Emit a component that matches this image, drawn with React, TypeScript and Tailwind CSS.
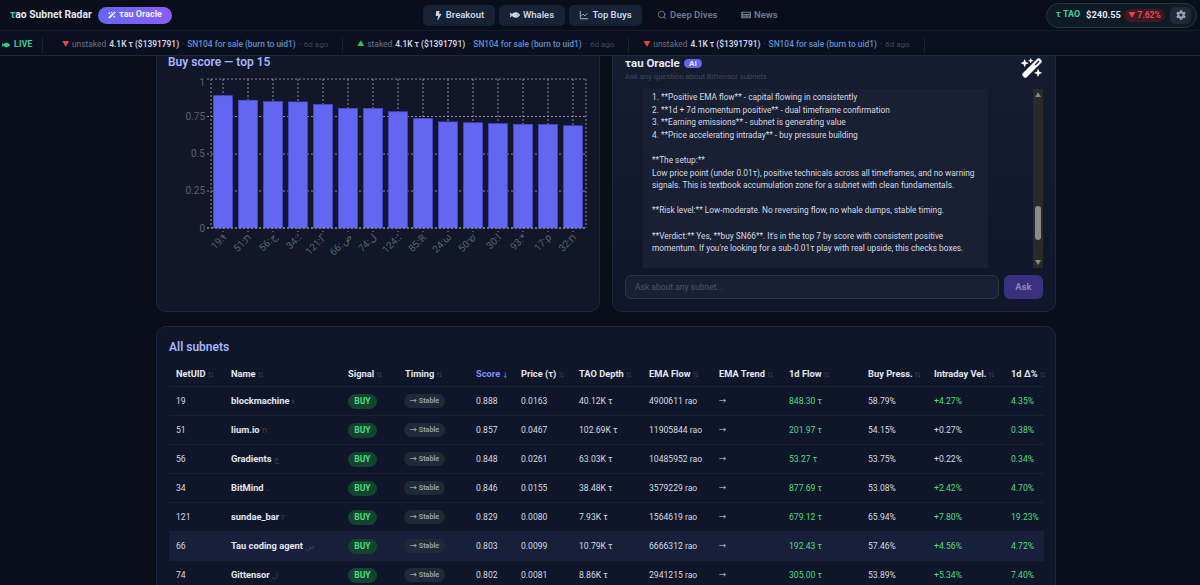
import { FaBolt, FaCog, FaFish, FaNewspaper } from 'react-icons/fa';
import { FaWandMagicSparkles } from 'react-icons/fa6';
import { ChartLine, Search } from 'lucide-react';

const bars = [
  { score: 0.888, label: '19:ŧ' },
  { score: 0.857, label: '51:ת' },
  { score: 0.848, label: '56:ج' },
  { score: 0.846, label: '34:؛' },
  { score: 0.829, label: '121:Γ' },
  { score: 0.803, label: '66:ض' },
  { score: 0.802, label: '74:ل' },
  { score: 0.78, label: '124:؛' },
  { score: 0.735, label: '85:ℝ' },
  { score: 0.712, label: '24:ω' },
  { score: 0.706, label: '50:ש' },
  { score: 0.7, label: '30:ا' },
  { score: 0.696, label: '93:*' },
  { score: 0.694, label: '17:ρ' },
  { score: 0.686, label: '32:ח' },
];

const yTicks = [
  { label: '1', y: 79, textY: 86 },
  { label: '0.75', y: 116.5, textY: 120 },
  { label: '0.5', y: 154, textY: 157 },
  { label: '0.25', y: 191, textY: 194 },
  { label: '0', y: 228, textY: 232 },
];

const columns = [
  { label: 'NetUID', width: 'w-[55px]' },
  { label: 'Name', width: 'w-[117px]' },
  { label: 'Signal', width: 'w-[57px]' },
  { label: 'Timing', width: 'w-[71px]' },
  { label: 'Score', width: 'w-[45px]' },
  { label: 'Price (τ)', width: 'w-[58px]' },
  { label: 'TAO Depth', width: 'w-[70px]' },
  { label: 'EMA Flow', width: 'w-[70px]' },
  { label: 'EMA Trend', width: 'w-[70px]' },
  { label: '1d Flow', width: 'w-[79px]' },
  { label: 'Buy Press.', width: 'w-[66px]' },
  { label: 'Intraday Vel.', width: 'w-[77px]' },
  { label: '1d Δ%', width: 'w-[40px]' },
];

const rows = [
  { id: 19, name: 'blockmachine', sym: 'ŧ', score: '0.888', price: '0.0163', depth: '40.12K τ', ema: '4900611 rao', flow: '848.30 τ', press: '58.79%', vel: '+4.27%', up: true, d1: '4.35%' },
  { id: 51, name: 'lium.io', sym: 'ח', score: '0.857', price: '0.0467', depth: '102.69K τ', ema: '11905844 rao', flow: '201.97 τ', press: '54.15%', vel: '+0.27%', up: false, d1: '0.38%' },
  { id: 56, name: 'Gradients', sym: 'ج', score: '0.848', price: '0.0261', depth: '63.03K τ', ema: '10485952 rao', flow: '53.27 τ', press: '53.75%', vel: '+0.22%', up: false, d1: '0.34%' },
  { id: 34, name: 'BitMind', sym: '،', score: '0.846', price: '0.0155', depth: '38.48K τ', ema: '3579229 rao', flow: '877.69 τ', press: '53.08%', vel: '+2.42%', up: true, d1: '4.70%' },
  { id: 121, name: 'sundae_bar', sym: 'Γ', score: '0.829', price: '0.0080', depth: '7.93K τ', ema: '1564619 rao', flow: '679.12 τ', press: '65.94%', vel: '+7.80%', up: true, d1: '19.23%' },
  { id: 66, name: 'Tau coding agent', sym: 'ض', score: '0.803', price: '0.0099', depth: '10.79K τ', ema: '6666312 rao', flow: '192.43 τ', press: '57.46%', vel: '+4.56%', up: true, d1: '4.72%' },
  { id: 74, name: 'Gittensor', sym: 'ل', score: '0.802', price: '0.0081', depth: '8.86K τ', ema: '2941215 rao', flow: '305.00 τ', press: '53.89%', vel: '+5.34%', up: true, d1: '7.40%' },
];

const oracleLines = [
  '1. **Positive EMA flow** - capital flowing in consistently',
  '2. **1d + 7d momentum positive** - dual timeframe confirmation',
  '3. **Earning emissions** - subnet is generating value',
  '4. **Price accelerating intraday** - buy pressure building',
  '',
  '**The setup:**',
  'Low price point (under 0.01τ), positive technicals across all timeframes, and no warning',
  'signals. This is textbook accumulation zone for a subnet with clean fundamentals.',
  '',
  '**Risk level:** Low-moderate. No reversing flow, no whale dumps, stable timing.',
  '',
  "**Verdict:** Yes, **buy SN66**. It's in the top 7 by score with consistent positive",
  "momentum. If you're looking for a sub-0.01τ play with real upside, this checks boxes.",
];

function TickerItem({ up }: { up: boolean }) {
  return (
    <div className="flex h-[14px] shrink-0 items-center border-r border-[#1a2233] px-[14px] text-[8.4px]">
      <span className={up ? 'mr-[3px] text-[7px] text-[#22c55e]' : 'mr-[3px] text-[7px] text-[#ef4444]'}>{up ? '▲' : '▼'}</span>
      <span className="text-[#6b7280]">{up ? 'staked' : 'unstaked'}</span>
      <span className="ml-[3px] font-semibold text-[#cbd5e1]">4.1K τ ($1391791)</span>
      <span className="mx-[3px] text-[#4b5563]">·</span>
      <span className="font-medium text-[#5f8fd0]">SN104 for sale (burn to uid1)</span>
      <span className="mx-[3px] text-[#4b5563]">·</span>
      <span className="text-[8px] text-[#3f4858]">6d ago</span>
    </div>
  );
}

function BuyChart() {
  return (
    <svg viewBox="157 67 442 220" width={442} height={220} className="-mt-[1px] block">
      <g stroke="#8b8f96" strokeWidth={1} strokeDasharray="2 2" fill="none">
        {yTicks.map((t) => (
          <line key={t.label} x1={207} x2={586} y1={t.y} y2={t.y} />
        ))}
        {bars.map((b, i) => (
          <line key={b.label} x1={223 + i * 25} x2={223 + i * 25} y1={79} y2={232} />
        ))}
        <line x1={211} x2={211} y1={79} y2={228} />
        <line x1={586} x2={586} y1={79} y2={228} />
      </g>
      {bars.map((b, i) => {
        const h = b.score * 149;
        return <rect key={b.label} x={213.5 + i * 25} y={228 - h} width={19} height={h} fill="#6366f1" stroke="#4f46e5" strokeWidth={0.7} />;
      })}
      <line x1={207} x2={586} y1={228} y2={228} stroke="#8b8f96" strokeDasharray="2 2" />
      {yTicks.map((t) => (
        <text key={t.label} x={205} y={t.textY} textAnchor="end" fontSize={10} fill="#5b6270">
          {t.label}
        </text>
      ))}
      {bars.map((b, i) => (
        <text
          key={b.label}
          x={227 + i * 25}
          y={238}
          textAnchor="end"
          fontSize={10}
          fill="#5b6270"
          transform={`rotate(-45 ${227 + i * 25} 238)`}
        >
          {b.label}
        </text>
      ))}
    </svg>
  );
}

export default function App() {
  return (
    <div className="h-[585px] w-[1200px] overflow-hidden bg-[#0a0e1a] font-['Roboto','Noto_Sans_CJK_SC',sans-serif] text-[#e2e8f0]">
      <header className="flex h-[31px] items-center border-b border-[#141b2a] bg-[#0a0e1a]">
        <div className="flex w-[423px] shrink-0 items-center pl-[10px]">
          <span className="w-[82px] whitespace-nowrap text-[10.3px] font-bold text-[#e2e8f0]">
            <span className="text-[#34d399]">τ</span>ao Subnet Radar
          </span>
          <button className="ml-[6px] flex h-[17px] w-[74px] items-center justify-center gap-[3px] rounded-full bg-gradient-to-r from-[#6366f1] to-[#8b5cf6] text-[9px] font-bold text-[#eef2ff]">
            <FaWandMagicSparkles className="h-[8px] w-[8px]" />
            τau Oracle
          </button>
        </div>
        <nav className="flex items-center gap-[4px] text-[9.5px] font-semibold">
          <a className="flex h-[21px] w-[72px] items-center justify-center gap-[3px] rounded-[5px] bg-[#162236] text-[#cbd5e1]">
            <FaBolt className="h-[9px] w-[9px]" /> Breakout
          </a>
          <a className="flex h-[21px] w-[66px] items-center justify-center gap-[3px] rounded-[5px] bg-[#162236] text-[#cbd5e1]">
            <FaFish className="h-[10px] w-[10px]" /> Whales
          </a>
          <a className="flex h-[21px] w-[73px] items-center justify-center gap-[3px] rounded-[5px] bg-[#162236] text-[#cbd5e1]">
            <ChartLine className="h-[10px] w-[10px]" strokeWidth={2} /> Top Buys
          </a>
          <a className="ml-[11px] flex h-[21px] w-[70px] items-center gap-[3px] text-[#6b7a90]">
            <Search className="h-[10px] w-[10px]" strokeWidth={2.2} /> Deep Dives
          </a>
          <a className="ml-[10px] flex h-[21px] items-center gap-[3px] text-[#6b7a90]">
            <FaNewspaper className="h-[10px] w-[10px]" /> News
          </a>
        </nav>
        <div className="ml-auto mr-[3px] flex h-[25px] w-[151px] items-center whitespace-nowrap rounded-full border border-[#1c3a3a] bg-[#0f1a24] pl-[9px]">
          <span className="w-[25px] text-[9px] font-bold text-[#34d399]">τ TAO</span>
          <span className="ml-[5px] w-[33px] text-[9.4px] font-bold text-[#e2e8f0]">$240.55</span>
          <span className="ml-[5px] flex h-[13px] w-[41px] items-center justify-center rounded-full bg-[#3a1a24] text-[8.5px] font-bold text-[#ef4444]">
            <span className="mr-[2px] text-[7px]">▼</span>7.62%
          </span>
          <span className="ml-[5px] flex h-[17px] w-[21px] items-center justify-center rounded-[5px] bg-[#1f2937] text-[#94a3b8]">
            <FaCog className="h-[10px] w-[10px]" />
          </span>
        </div>
      </header>

      <div className="flex h-[25px] items-center overflow-hidden border-b border-[#1a2a33] bg-[#0b1020] pt-[3px]">
        <div className="mr-[5px] flex h-[14px] w-[43px] shrink-0 items-center gap-[4px] border-r border-[#1a2233] pl-[2px] text-[8.5px] font-bold tracking-[0.3px] text-[#34d399]">
          <FaFish className="h-[8px] w-[8px]" /> LIVE
        </div>
        <TickerItem up={false} />
        <TickerItem up />
        <TickerItem up={false} />
      </div>

      <main className="ml-[156px] w-[900px]">
        <div className="grid grid-cols-2 gap-[12px]">
          <section className="h-[256px] rounded-b-[10px] border-x border-b border-[#1c2740] bg-[#111729]">
            <h2 className="pl-[11px] text-[12px] font-semibold leading-[12px] text-[#a5b4fc]">Buy score — top 15</h2>
            <BuyChart />
          </section>

          <section className="flex h-[256px] flex-col rounded-b-[10px] border-x border-b border-[#1c2740] bg-gradient-to-b from-[#161c30] to-[#0f1629] px-[12px]">
            <div className="flex h-[33px] items-start justify-between">
              <div>
                <div className="mt-[1px] flex items-center gap-[5px]">
                  <span className="w-[54px] whitespace-nowrap text-[11.5px] font-bold leading-[12px] text-[#e2e8f0]">τau Oracle</span>
                  <span className="rounded-full bg-[#6366f1] px-[5px] text-[8px] font-bold leading-[9px] text-[#e0e7ff]">AI</span>
                </div>
                <p className="mt-[2px] text-[7.7px] text-[#3f4858]">Ask any question about Bittensor subnets</p>
              </div>
              <FaWandMagicSparkles className="mt-[2px] h-[20px] w-[22px] text-white" />
            </div>
            <div className="flex h-[179px] justify-between">
              <div className="ml-[18px] h-full w-[345px] bg-[#1a2033] px-[9px] pt-[2px] text-[8.3px] leading-[12.6px] text-[#d5dbe5]">
                {oracleLines.map((line, i) => (
                  <div key={i} className="h-[12.6px] whitespace-nowrap">
                    {line}
                  </div>
                ))}
              </div>
              <div className="flex h-full w-[10px] flex-col items-center justify-between bg-[#2a2a2a] py-[3px] text-[6px] leading-[6px] text-[#8a8a8a]">
                <span>▲</span>
                <span className="mt-auto mb-[19px] h-[34px] w-[6px] rounded-full bg-[#8a8a8a]" />
                <span>▼</span>
              </div>
            </div>
            <div className="mt-[7px] flex gap-[5px]">
              <input
                readOnly
                placeholder="Ask about any subnet..."
                className="h-[24px] w-[374px] rounded-[6px] border border-[#2a3347] bg-[#1a2033] px-[9px] text-[8.5px] placeholder:text-[#4b5563]"
              />
              <button className="h-[24px] w-[39px] rounded-[6px] bg-[#3b3080] text-[9.5px] font-bold text-[#8a8aa8]">Ask</button>
            </div>
          </section>
        </div>

        <section className="mt-[14px] h-[300px] rounded-[10px] border border-[#1c2740] bg-[#0f1629] px-[12px] pt-[13px]">
          <h2 className="text-[12px] font-semibold leading-[14px] text-[#a5b4fc]">All subnets</h2>
          <table className="mt-[7px] w-[875px] table-fixed border-collapse text-left text-[8.6px] text-[#d5dbe5]">
            <thead>
              <tr className="h-[25px] border-b border-[#182136] text-[9.3px]">
                {columns.map((c) => (
                  <th key={c.label} className={`${c.width} whitespace-nowrap pl-[7px] pt-[1px] font-bold ${c.label === 'Score' ? 'text-[#818cf8]' : 'text-[#e2e8f0]'}`}>
                    {c.label}
                    <span className={c.label === 'Score' ? 'ml-[2px] text-[6px] text-[#818cf8]' : 'ml-[2px] text-[6px] text-[#374151]'}>
                      {c.label === 'Score' ? '↓' : '⇅'}
                    </span>
                  </th>
                ))}
              </tr>
            </thead>
            <tbody>
              {rows.map((r) => (
                <tr key={r.id} className={`h-[29px] border-b border-[#182136] [&>td]:pt-[1px] ${r.id === 66 ? 'bg-[#181f3a]' : ''}`}>
                  <td className="pl-[7px]">{r.id}</td>
                  <td className="whitespace-nowrap pl-[7px] text-[9.3px] font-bold text-[#e2e8f0]">
                    {r.name} <span className="text-[8px] font-normal text-[#374151]">{r.sym}</span>
                  </td>
                  <td className="pl-[7px]">
                    <span className="flex h-[15px] w-[29px] items-center justify-center rounded-full bg-[#14432f] text-[8.5px] font-bold text-[#4ade80]">BUY</span>
                  </td>
                  <td className="pl-[6px]">
                    <span className="flex h-[14px] w-[41px] items-center justify-center rounded-full bg-[#1f2937] text-[7.2px] font-semibold text-[#9ca3af]">→ Stable</span>
                  </td>
                  <td className="pl-[7px]">{r.score}</td>
                  <td className="pl-[7px]">{r.price}</td>
                  <td className="whitespace-nowrap pl-[7px]">{r.depth}</td>
                  <td className="whitespace-nowrap pl-[7px]">{r.ema}</td>
                  <td className="pl-[7px] text-[7px]">→</td>
                  <td className="whitespace-nowrap pl-[7px] text-[#4ade80]">{r.flow}</td>
                  <td className="pl-[7px]">{r.press}</td>
                  <td className={`pl-[7px] ${r.up ? 'text-[#4ade80]' : 'text-[#d5dbe5]'}`}>{r.vel}</td>
                  <td className="pl-[7px] text-[#4ade80]">{r.d1}</td>
                </tr>
              ))}
            </tbody>
          </table>
        </section>
      </main>
    </div>
  );
}
